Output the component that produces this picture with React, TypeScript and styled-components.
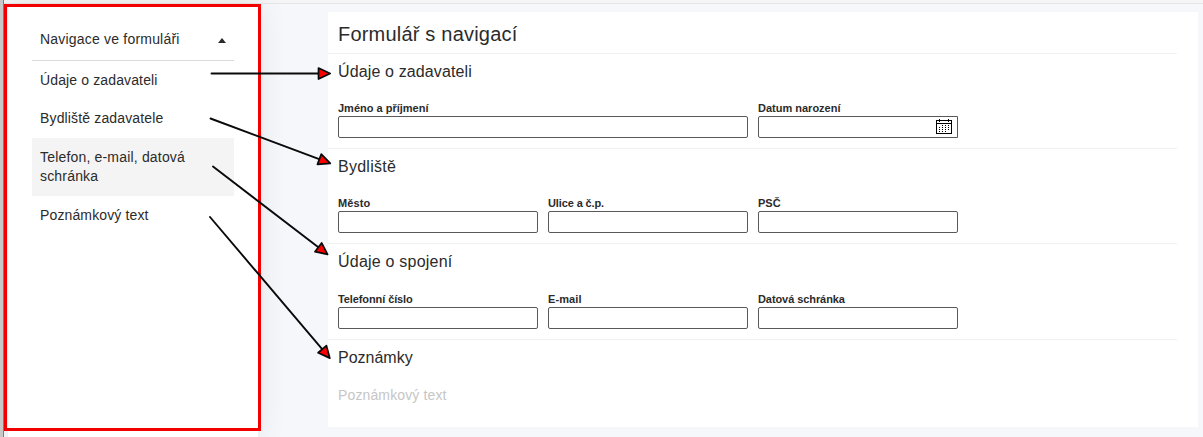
import React from "react";
import styled, { createGlobalStyle } from "styled-components";

const Global = createGlobalStyle`
  * { box-sizing: border-box; }
  body { margin: 0; overflow: hidden; font-family: "Liberation Sans", Arial, sans-serif; color: #2b2b2b; }
`;

const Page = styled.div`
  position: relative;
  display: flex;
  flex-direction: column;
  width: 1203px;
  height: 437px;
  overflow: hidden;
  background: #f6f7fa;
`;

const TopBar = styled.div`
  height: 4px;
  flex: none;
  margin-left: 4px;
  background: #f5f5f5;
  border-bottom: 1px solid #e6e6e6;
`;

const Body = styled.div`
  display: flex;
  flex: 1;
  padding-left: 8px;
`;

const Edge = styled.div`
  position: absolute;
  left: 0;
  top: 0;
  width: 4px;
  height: 437px;
  background: #c8c8c9;
  border-right: 1px solid #6c7f9e;
`;

const Sidebar = styled.nav`
  width: 250px;
  flex: none;
  padding: 17px 24px 0;
  background: #fff;
  box-shadow: 0 0 30px rgba(0, 0, 0, 0.09);
`;

const NavHeader = styled.div`
  display: flex;
  align-items: center;
  justify-content: space-between;
  height: 40px;
  padding: 0 8px 3px;
  border-bottom: 1px solid #d9d9d9;
  font-size: 14px;
  letter-spacing: 0.2px;
`;

const Caret = styled.span`
  width: 0;
  height: 0;
  margin-top: 2px;
  border: 4.5px solid transparent;
  border-top: 0;
  border-bottom: 5px solid #2b2b2b;
`;

const NavItem = styled.div<{ $active?: boolean; $spacing: number }>`
  padding: 9.65px 8px;
  background: ${(p) => (p.$active ? "#f4f4f4" : "transparent")};
  font-size: 14px;
  line-height: 19.25px;
  letter-spacing: ${(p) => p.$spacing}px;

  &:last-child {
    padding-top: 10.4px;
  }
`;

const Panel = styled.main`
  width: 870px;
  height: 415px;
  margin: 8px 0 0 70px;
  padding-right: 21px;
  background: #fff;
`;

const Title = styled.h1`
  height: 42px;
  margin: 0;
  padding: 0 10px;
  border-bottom: 1px solid #f1f1f2;
  font-size: 20px;
  font-weight: 400;
  line-height: 44px;
  letter-spacing: 0.2px;
`;

const Section = styled.section<{ $last?: boolean; $height?: number }>`
  height: ${(p) => p.$height ?? 95}px;
  padding: 0 10px;
  border-bottom: ${(p) => (p.$last ? "0" : "1px solid #f1f1f2")};
`;

const Heading = styled.h2<{ $spacing?: number; $height?: number }>`
  height: ${(p) => p.$height ?? 47}px;
  margin: 0;
  font-size: 16px;
  font-weight: 400;
  line-height: 35px;
  letter-spacing: ${(p) => p.$spacing ?? 0}px;
`;

const Fields = styled.div`
  display: grid;
  grid-template-columns: repeat(3, 200px);
  gap: 10px;
`;

const Field = styled.label<{ $wide?: boolean }>`
  display: flex;
  flex-direction: column;
  grid-column: span ${(p) => (p.$wide ? 2 : 1)};
`;

const Caption = styled.span<{ $spacing?: number }>`
  height: 15px;
  font-size: 11px;
  font-weight: 700;
  line-height: 14px;
  letter-spacing: ${(p) => p.$spacing ?? 0}px;
`;

const Box = styled.span<{ $date?: boolean }>`
  display: flex;
  align-items: center;
  justify-content: flex-end;
  height: 22px;
  padding-right: 5px;
  border: 1px solid #595959;
  border-radius: ${(p) => (p.$date ? "2px 0 0 2px" : "2px")};
  background: #fff;
`;

const Note = styled.p`
  margin: 0;
  font-size: 14px;
  line-height: 18px;
  letter-spacing: 0.13px;
  color: #c6c6c6;
`;

const Frame = styled.div`
  position: absolute;
  left: 4px;
  top: 4px;
  width: 257px;
  height: 427px;
  border: 3px solid #f20000;
`;

const Overlay = styled.svg`
  position: absolute;
  left: 0;
  top: 0;
`;

const Calendar = () => (
  <svg width="16" height="16" viewBox="0 0 16 16" shapeRendering="crispEdges">
    <path d="M0 1h16v14H0zM1 2v2h14V2zM1 5v9h14V5z" fill="#000" fillRule="evenodd" />
    <path d="M3 0h1v3H3zM12 0h1v3h-1z" fill="#000" />
    {[6, 8, 10, 12].map((y, r) =>
      [3, 6, 9, 12].map((x, c) =>
        (r === 0 && c === 0) || (r === 3 && c === 3) ? null : (
          <rect key={`${x}-${y}`} x={x} y={y} width="1" height="1" />
        ),
      ),
    )}
  </svg>
);

const arrows = [
  [211.5, 73.5, 332, 73.5],
  [210.5, 118.5, 332, 164],
  [213, 166.5, 329, 255.5],
  [210, 217, 331, 359.5],
];

const Arrow = ({ p }: { p: number[] }) => {
  const [x1, y1, x2, y2] = p;
  const length = Math.hypot(x2 - x1, y2 - y1);
  const angle = (Math.atan2(y2 - y1, x2 - x1) * 180) / Math.PI;
  return (
    <g transform={`translate(${x1} ${y1}) rotate(${angle})`} stroke="#0a0a0a" strokeLinecap="round" strokeLinejoin="round">
      <line x1="0" y1="0" x2={length - 13} y2="0" strokeWidth="1.9" />
      <path d={`M${length - 13.5} -5.5L${length - 1.8} 0L${length - 13.5} 5.5Z`} fill="#fa0000" strokeWidth="1.7" />
    </g>
  );
};

type FieldData = { label: string; wide?: boolean; date?: boolean; spacing?: number };
type SectionData = {
  title: string;
  spacing?: number;
  height?: number;
  headingHeight?: number;
  fields: FieldData[];
};

const sections: SectionData[] = [
  {
    title: "Údaje o zadavateli",
    spacing: 0.13,
    fields: [
      { label: "Jméno a příjmení", wide: true },
      { label: "Datum narození", date: true },
    ],
  },
  {
    title: "Bydliště",
    spacing: 0.25,
    fields: [{ label: "Město", spacing: 0.1 }, { label: "Ulice a č.p.", spacing: -0.12 }, { label: "PSČ" }],
  },
  {
    title: "Údaje o spojení",
    spacing: 0.22,
    height: 96,
    headingHeight: 48,
    fields: [
      { label: "Telefonní číslo", spacing: -0.1 },
      { label: "E-mail", spacing: 0.1 },
      { label: "Datová schránka", spacing: -0.08 },
    ],
  },
];

const navItems = [
  { text: "Údaje o zadavateli", spacing: 0.13 },
  { text: "Bydliště zadavatele", spacing: 0.15 },
  { text: "Telefon, e-mail, datová schránka", spacing: 0.18, active: true },
  { text: "Poznámkový text", spacing: 0.13 },
];

export default function App() {
  return (
    <Page>
      <Global />
      <TopBar />
      <Body>
        <Sidebar>
          <NavHeader>
            Navigace ve formuláři
            <Caret />
          </NavHeader>
          {navItems.map((n) => (
            <NavItem key={n.text} $active={n.active} $spacing={n.spacing}>
              {n.text}
            </NavItem>
          ))}
        </Sidebar>
        <Panel>
          <Title>Formulář s navigací</Title>
          {sections.map((s) => (
            <Section key={s.title} $height={s.height}>
              <Heading $spacing={s.spacing} $height={s.headingHeight}>
                {s.title}
              </Heading>
              <Fields>
                {s.fields.map((f) => (
                  <Field key={f.label} $wide={f.wide}>
                    <Caption $spacing={f.spacing}>{f.label}</Caption>
                    <Box $date={f.date}>{f.date && <Calendar />}</Box>
                  </Field>
                ))}
              </Fields>
            </Section>
          ))}
          <Section $last $height={87}>
            <Heading $height={46}>Poznámky</Heading>
            <Note>Poznámkový text</Note>
          </Section>
        </Panel>
      </Body>
      <Edge />
      <Frame />
      <Overlay width="1203" height="437" viewBox="0 0 1203 437">
        {arrows.map((p) => (
          <Arrow key={p[1]} p={p} />
        ))}
      </Overlay>
    </Page>
  );
}
